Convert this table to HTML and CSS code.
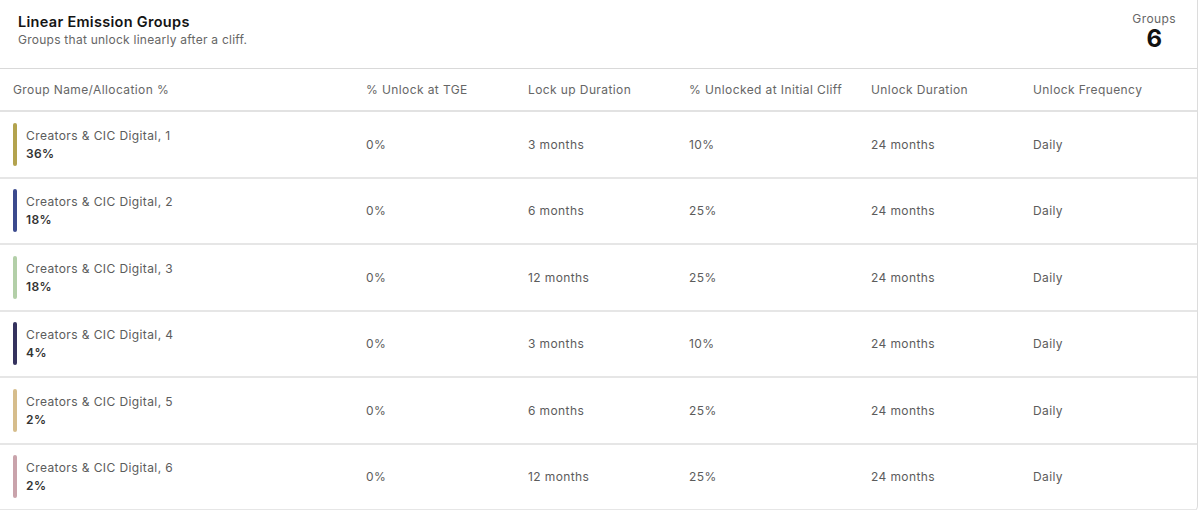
FILE: index.html
```html
<!DOCTYPE html>
<html lang="en">
<head>
<meta charset="utf-8">
<title>Linear Emission Groups</title>
<link rel="stylesheet" href="styles.css">
</head>
<body>
<section class="card">
  <header class="card-head">
    <div class="head-text">
      <h2 class="title">Linear Emission Groups</h2>
      <p class="subtitle">Groups that unlock linearly after a cliff.</p>
    </div>
    <div class="count">
      <span class="count-label">Groups</span>
      <span class="count-value">6</span>
    </div>
  </header>
  <table class="groups">
    <colgroup>
      <col class="c1"><col class="c2"><col class="c3"><col class="c4"><col class="c5"><col class="c6">
    </colgroup>
    <thead>
      <tr>
        <th>Group Name/Allocation %</th>
        <th>% Unlock at TGE</th>
        <th>Lock up Duration</th>
        <th>% Unlocked at Initial Cliff</th>
        <th>Unlock Duration</th>
        <th>Unlock Frequency</th>
      </tr>
    </thead>
    <tbody>
      <tr>
        <td><div class="name"><span class="bar b1"></span><div><div class="gname">Creators &amp; CIC Digital, 1</div><div class="alloc">36%</div></div></div></td>
        <td>0%</td><td>3 months</td><td>10%</td><td>24 months</td><td>Daily</td>
      </tr>
      <tr>
        <td><div class="name"><span class="bar b2"></span><div><div class="gname">Creators &amp; CIC Digital, 2</div><div class="alloc">18%</div></div></div></td>
        <td>0%</td><td>6 months</td><td>25%</td><td>24 months</td><td>Daily</td>
      </tr>
      <tr>
        <td><div class="name"><span class="bar b3"></span><div><div class="gname">Creators &amp; CIC Digital, 3</div><div class="alloc">18%</div></div></div></td>
        <td>0%</td><td>12 months</td><td>25%</td><td>24 months</td><td>Daily</td>
      </tr>
      <tr>
        <td><div class="name"><span class="bar b4"></span><div><div class="gname">Creators &amp; CIC Digital, 4</div><div class="alloc">4%</div></div></div></td>
        <td>0%</td><td>3 months</td><td>10%</td><td>24 months</td><td>Daily</td>
      </tr>
      <tr>
        <td><div class="name"><span class="bar b5"></span><div><div class="gname">Creators &amp; CIC Digital, 5</div><div class="alloc">2%</div></div></div></td>
        <td>0%</td><td>6 months</td><td>25%</td><td>24 months</td><td>Daily</td>
      </tr>
      <tr>
        <td><div class="name"><span class="bar b6"></span><div><div class="gname">Creators &amp; CIC Digital, 6</div><div class="alloc">2%</div></div></div></td>
        <td>0%</td><td>12 months</td><td>25%</td><td>24 months</td><td>Daily</td>
      </tr>
    </tbody>
  </table>
</section>
</body>
</html>
```
FILE: styles.css
```css
* { box-sizing: border-box; }
html, body { margin: 0; padding: 0; background: #fff; }
body {
  font-family: Inter, "Liberation Sans", sans-serif;
  color: #555;
  width: 1200px;
  height: 510px;
  overflow: hidden;
}
.card {
  width: 1198px;
  border-right: 1px solid #dcdcdc;
  border-bottom: 1px solid #dcdcdc;
  border-bottom-right-radius: 6px;
  background: #fff;
}
.card-head {
  display: flex;
  justify-content: space-between;
  align-items: flex-start;
  height: 69px;
  padding: 12px 21px 0 18px;
  border-bottom: 1px solid #d9d9d9;
}
.title {
  margin: 0;
  font-size: 14.5px;
  font-weight: 600;
  color: #141414;
  line-height: 19px;
  letter-spacing: 0.3px;
}
.subtitle {
  margin: 2px 0 0;
  font-size: 12px;
  color: #666;
  line-height: 14px;
  letter-spacing: 0.25px;
}
.count {
  display: flex;
  flex-direction: column;
  align-items: center;
}
.count-label {
  font-size: 12px;
  color: #666;
  line-height: 14px;
  letter-spacing: 0.4px;
}
.count-value {
  font-size: 24px;
  font-weight: 700;
  color: #111;
  line-height: 26px;
}
.groups {
  width: 100%;
  border-collapse: collapse;
  table-layout: fixed;
  letter-spacing: 0.4px;
}
.c1 { width: 366px; }
.c2 { width: 162px; }
.c3 { width: 161px; }
.c4 { width: 182px; }
.c5 { width: 162px; }
.groups th {
  height: 42px;
  text-align: left;
  font-weight: 400;
  font-size: 12px;
  color: #666;
  padding: 0;
  border-bottom: 2px solid #e2e2e2;
  vertical-align: middle;
}
.groups td {
  height: 66.5px;
  padding: 0;
  font-size: 12px;
  color: #5c5c5c;
  border-bottom: 2px solid #e6e6e6;
  vertical-align: middle;
}
.groups th:first-child, .groups td:first-child { padding-left: 13px; }
.name {
  display: flex;
  align-items: center;
  gap: 9px;
}
.bar {
  width: 4px;
  height: 43px;
  border-radius: 2px;
  flex: none;
}
.b1 { background: #b3a34e; }
.b2 { background: #3c4a8e; }
.b3 { background: #b3cfa8; }
.b4 { background: #35325e; }
.b5 { background: #d6bd8c; }
.b6 { background: #c9a3ab; }
.gname {
  font-size: 12px;
  color: #5c5c5c;
  line-height: 17px;
}
.alloc {
  font-size: 12px;
  font-weight: 600;
  color: #333;
  line-height: 17px;
  margin-top: 1px;
}
```
